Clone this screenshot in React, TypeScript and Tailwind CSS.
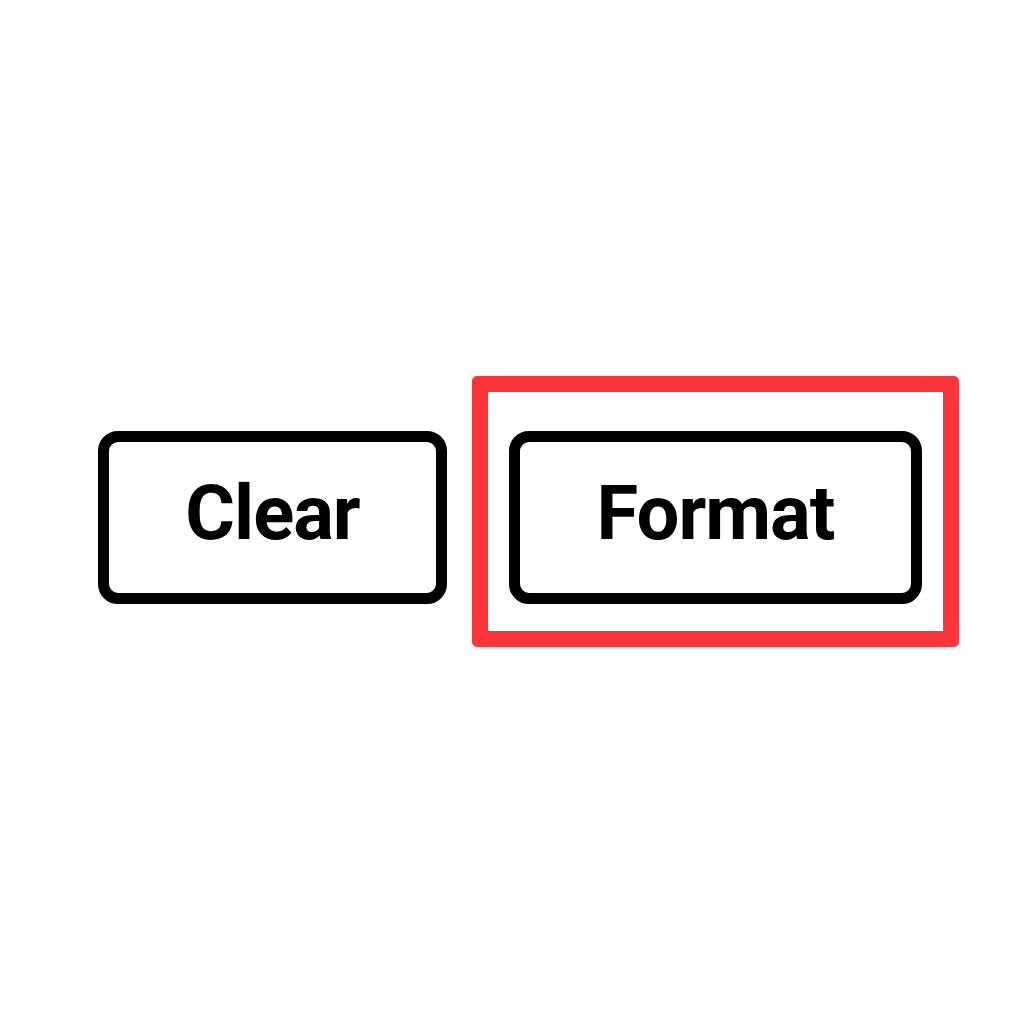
export default function App() {
  return (
    <div className="w-[1024px] h-[1024px] bg-white flex items-start pl-[98px] pt-[376px] font-['Roboto',sans-serif]">
      <div className="mt-[55px] w-[349px] h-[173px] border-[11px] border-black rounded-[20px] flex items-center justify-center pb-[9px]">
        <span className="text-[76px] font-bold leading-none tracking-[-1px] text-black">Clear</span>
      </div>
      <div className="ml-[25px] border-[16px] border-[#fc353d] rounded-[5px] pt-[39px] pb-[27px] px-[21px]">
        <div className="w-[413px] h-[173px] border-[11px] border-black rounded-[20px] flex items-center justify-center pb-[9px]">
          <span className="text-[76px] font-bold leading-none tracking-[-1px] text-black">Format</span>
        </div>
      </div>
    </div>
  );
}
